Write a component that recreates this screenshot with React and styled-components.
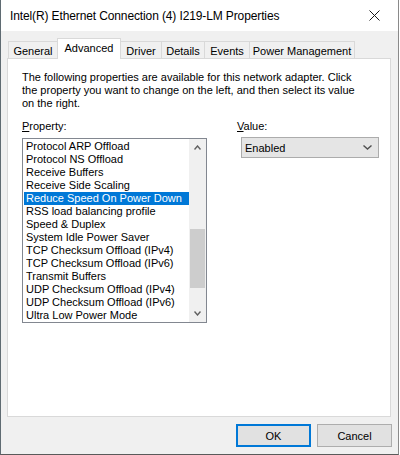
import React from 'react'
import styled, { createGlobalStyle } from 'styled-components'

const GlobalStyle = createGlobalStyle`
  body {
    margin: 0;
    background: #ffffff;
    font-family: "Liberation Sans", Arial, sans-serif;
  }
`

const tabs = [
  { label: 'General', width: 50 },
  { label: 'Advanced', width: 64, active: true },
  { label: 'Driver', width: 42 },
  { label: 'Details', width: 44 },
  { label: 'Events', width: 46 },
  { label: 'Power Management', width: 106 },
]

const properties = [
  'Protocol ARP Offload',
  'Protocol NS Offload',
  'Receive Buffers',
  'Receive Side Scaling',
  'Reduce Speed On Power Down',
  'RSS load balancing profile',
  'Speed & Duplex',
  'System Idle Power Saver',
  'TCP Checksum Offload (IPv4)',
  'TCP Checksum Offload (IPv6)',
  'Transmit Buffers',
  'UDP Checksum Offload (IPv4)',
  'UDP Checksum Offload (IPv6)',
  'Ultra Low Power Mode',
]

const Chevron = ({ up, color = '#606060', width = 7 }) => (
  <svg width={width} height="5" viewBox={`0 0 ${width} 5`}>
    <polyline
      points={up ? `0.5,4.5 ${width / 2},1 ${width - 0.5},4.5` : `0.5,0.5 ${width / 2},4 ${width - 0.5},0.5`}
      fill="none"
      stroke={color}
      strokeWidth="1.4"
    />
  </svg>
)

const App = () => {
  return (
    <>
      <GlobalStyle />
      <Window>
        <TitleBar>
          <Title>Intel(R) Ethernet Connection (4) I219-LM Properties</Title>
          <CloseButton>
            <svg width="11" height="11" viewBox="0 0 11 11">
              <path d="M0.5 0.5 L10.5 10.5 M10.5 0.5 L0.5 10.5" stroke="#1a1a1a" strokeWidth="1" />
            </svg>
          </CloseButton>
        </TitleBar>
        <Body>
          <TabStrip>
            {tabs.map(t => (
              <Tab key={t.label} $active={t.active} $width={t.width}>{t.label}</Tab>
            ))}
          </TabStrip>
          <Panel>
            <Description>
              The following properties are available for this network adapter. Click<br />
              the property you want to change on the left, and then select its value<br />
              on the right.
            </Description>
            <Columns>
              <Column>
                <FieldLabel><u>P</u>roperty:</FieldLabel>
                <ListBox>
                  <Items>
                    {properties.map(p => (
                      <Item key={p} $selected={p === 'Reduce Speed On Power Down'}>{p}</Item>
                    ))}
                  </Items>
                  <ScrollBar>
                    <ScrollArrow><Chevron up /></ScrollArrow>
                    <Track>
                      <Thumb />
                    </Track>
                    <ScrollArrow><Chevron /></ScrollArrow>
                  </ScrollBar>
                </ListBox>
              </Column>
              <Column>
                <FieldLabel><u>V</u>alue:</FieldLabel>
                <Combo>
                  <span>Enabled</span>
                  <Chevron color="#505050" width={9} />
                </Combo>
              </Column>
            </Columns>
          </Panel>
          <ButtonRow>
            <Button $default>OK</Button>
            <Button>Cancel</Button>
          </ButtonRow>
        </Body>
      </Window>
    </>
  )
}

export default App

const Window = styled.div`
width: 399px;
height: 455px;
box-sizing: border-box;
display: flex;
flex-direction: column;
background: #f0f0f0;
border-left: 1px solid #5f6b72;
border-right: 1px solid #8a8a8a;
border-bottom: 1px solid #5a5a5a;
`
const TitleBar = styled.div`
height: 31px;
flex-shrink: 0;
background: #ffffff;
display: flex;
align-items: center;
justify-content: space-between;
padding-left: 9px;
`
const Title = styled.div`
font-size: 12px;
letter-spacing: -0.12px;
color: #000;
`
const CloseButton = styled.div`
width: 46px;
height: 31px;
display: flex;
align-items: center;
justify-content: center;
margin-right: 1px;
`
const Body = styled.div`
flex: 1;
display: flex;
flex-direction: column;
padding: 7px 7px 0 6px;
font-size: 11px;
color: #000;
`
const TabStrip = styled.div`
height: 21px;
display: flex;
align-items: flex-end;
padding-left: 1px;
margin-bottom: -1px;
position: relative;
z-index: 1;
`
const Tab = styled.div`
box-sizing: border-box;
width: ${p => p.$width}px;
height: ${p => (p.$active ? 21 : 18)}px;
margin-left: -1px;
display: flex;
justify-content: center;
align-items: ${p => (p.$active ? 'flex-start' : 'center')};
padding-top: ${p => (p.$active ? 3 : 1)}px;
background: ${p => (p.$active ? '#ffffff' : '#f0f0f0')};
border: 1px solid #d9d9d9;
border-bottom: ${p => (p.$active ? 'none' : '1px solid #d9d9d9')};
white-space: nowrap;
position: relative;
z-index: ${p => (p.$active ? 2 : 1)};
&:first-child {
  margin-left: 0;
}
`
const Panel = styled.div`
height: 359px;
box-sizing: border-box;
background: #ffffff;
border: 1px solid #d9d9d9;
padding: 12px 14px 0 14px;
`
const Description = styled.p`
margin: 0;
line-height: 13px;
white-space: nowrap;
`
const Columns = styled.div`
display: grid;
grid-template-columns: 185px 141px;
column-gap: 30px;
margin-top: 10px;
`
const Column = styled.div`
display: flex;
flex-direction: column;
`
const FieldLabel = styled.div`
line-height: 13px;
margin-bottom: 5px;
u {
  text-decoration: underline;
  text-underline-offset: 1px;
}
`
const ListBox = styled.div`
box-sizing: border-box;
height: 185px;
border: 1px solid #828790;
display: flex;
`
const Items = styled.div`
flex: 1;
padding: 1px 0 0 1px;
overflow: hidden;
`
const Item = styled.div`
height: 13px;
line-height: 13px;
padding-left: 2px;
white-space: nowrap;
background: ${p => (p.$selected ? '#0078d7' : 'transparent')};
color: ${p => (p.$selected ? '#ffffff' : '#000000')};
`
const ScrollBar = styled.div`
width: 17px;
background: #f0f0f0;
display: flex;
flex-direction: column;
`
const ScrollArrow = styled.div`
height: 17px;
display: flex;
align-items: center;
justify-content: center;
`
const Track = styled.div`
flex: 1;
display: flex;
flex-direction: column;
align-items: center;
`
const Thumb = styled.div`
width: 15px;
height: 59px;
margin-top: 73px;
background: #cdcdcd;
`
const Combo = styled.div`
box-sizing: border-box;
width: 138px;
height: 21px;
margin-left: 4px;
margin-top: -1px;
background: #e5e5e5;
border: 1px solid #acacac;
display: flex;
align-items: center;
justify-content: space-between;
padding: 0 6px 0 3px;
`
const ButtonRow = styled.div`
display: flex;
justify-content: flex-end;
gap: 6px;
margin-top: 7px;
margin-right: -1px;
`
const Button = styled.div`
box-sizing: border-box;
width: 75px;
height: 23px;
display: flex;
align-items: center;
justify-content: center;
background: #e1e1e1;
border: ${p => (p.$default ? '2px solid #0078d7' : '1px solid #adadad')};
`
